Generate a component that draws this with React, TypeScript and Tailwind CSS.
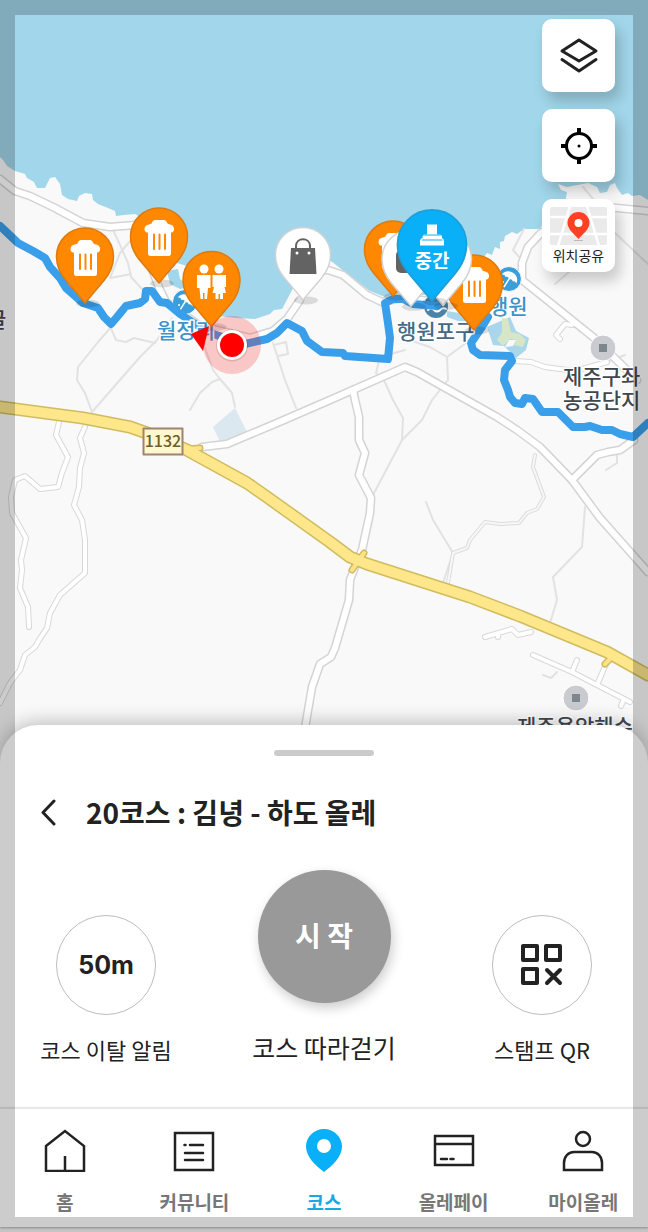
import type { ReactNode } from 'react';

const WHITE_ROADS = [
  'M0 179L15 191L30 196L53 207L83 223L110 227L135 225L160 290L166 302L200 326L250 338L273 331L287 319L300 300',
  'M300 270L328 270L343 275L367 295L382 302L400 298L440 302',
  'M202 447L227 444L277 423L330 400L405 367L417 372L497 417L517 430L540 447L572 480L600 518L648 572',
  'M572 480L597 455L608 452L620 450L634 440',
  'M353 390L355 400L359 417L359 440L365 453L359 475L371 498L370 513L362 550L355 567L350 580L349 600L335 648L331 657L320 664L312 687L305 728',
  'M548 228L540 234L528 247L522 263L522 280L537 292L593 337L637 380',
  'M600 207L617 208L648 211',
];

const NARROW_ROADS = [
  'M59 422L56 435L68 457L62 473L58 487L40 489L25 476L15 480L11 497L12 513L26 538L21 560L22 570L20 588L28 607L29 627',
  'M85 427L80 438L84 453L80 468L79 487L74 505L82 520L85 540L85 573L60 595L50 613L47 628L39 640L35 647L25 655L20 670L10 683L0 703',
  'M485 637L512 629L518 635L531 632M498 633L498 637',
  'M533 655L572 672L597 685L630 702M572 672L577 660M597 685L606 664M624 699L621 706',
  'M515 361L531 362L545 367L575 371L607 362',
  'M572 325L565 324L556 335L560 339',
];

const PATHS = [
  'M92 412L85 393L77 380L78 367L98 342L112 326L122 312',
  'M92 412L140 357L157 340L172 318',
  'M113 230L120 245L128 263L131 277L143 290',
  'M131 240L120 253L110 278L131 274',
  'M110 326L116 340L126 342L134 338L155 343',
  'M190 410L200 393L212 382L220 379',
  'M203 343L213 370L220 379L232 393L235 407',
  'M273 343L285 380L296 408M274 345L286 342L288 354L278 356',
  'M393 400L403 418L402 440L373 495M402 440L422 420L432 400L448 380L447 357L470 340',
  'M393 400L383 378L376 373L380 357L405 350M447 357L430 347L415 342',
  'M426 502L433 520L453 553L443 583',
  'M585 507L582 547L553 577L557 600L550 623',
  'M617 455L617 463L606 470',
  'M557 672L551 678L543 675',
  'M615 233L648 264M555 284L590 254M524 229L513 250L520 258M607 362L625 355M583 187L600 207',
];

const DOUBLE_PATHS = 'M535 455L533 467L544 497L537 509L527 513L519 523L500 524L485 522L470 540L467 548L453 553L448 583';

const HIGHWAY =
  'M0 407L83 418L130 427L147 433L187 450L247 483L267 497L330 542L350 557L367 564L470 597L520 616L607 652L648 675';
const RAMPS = 'M187 449L200 448M352 570L364 553M605 664L613 656';

const ROUTE_WEST =
  'M0 226L18 243L33 251L45 258L50 267L60 278L66 288L83 303L98 308L104 317L111 324L117 317L126 306L140 303L145 299L146 291L152 291L160 302L167 303L180 314L200 327L213 334L245 344L267 339L277 333L287 323L302 331L307 341L322 352L343 353L345 356L388 359L390 338L388 323L385 303L393 299L403 299L413 304L437 306';
const ROUTE_EAST =
  'M488 317L482 327L471 343L473 350L480 355L510 356L512 361L505 370L504 380L508 390L510 397L515 403L522 404L525 398L533 399L542 412L558 412L573 427L585 427L590 426L602 430L612 430L620 434L633 437L648 423';

function Pin({ x, y, fill, stroke, r = 28.5, children }: {
  x: number; y: number; fill: string; stroke: string; r?: number; children?: ReactNode;
}) {
  return (
    <g transform={`translate(${x} ${y})`}>
      <ellipse cx="3" cy={r * 1.65} rx="12" ry="4" fill="#000" opacity="0.12" />
      <path
        transform={`scale(${r / 28.5})`}
        d="M-28.5 0A28.5 28.5 0 0 1 28.5 0C28.5 9 25 17 19 24L0 46.5L-19 24C-25 17-28.5 9-28.5 0Z"
        fill={fill}
        stroke={stroke}
        strokeWidth="1.5"
      />
      {children}
    </g>
  );
}

function TrashGlyph() {
  return (
    <>
      <path
        d="M-11-4H-12.500Q-14.500-5-14.500-7V-8Q-14-11.500-10-12Q-7-12.500-7-14Q-6.500-16.500-4-16.500H5Q7.500-16.500 8-14Q8-12.500 11-12Q14.500-11.500 15-8V-7Q15-5 13-4H12V17Q12 19.500 9.500 19.500H-8.500Q-11 19.500-11 17Z"
        fill="#fff"
      />
      <path d="M-5-2V12.500M0.500-2V12.500M6-2V12.500" stroke="#ff8800" strokeWidth="2" />
    </>
  );
}

function TrashPin({ x, y }: { x: number; y: number }) {
  return (
    <Pin x={x} y={y} fill="#ff8800" stroke="#df7a0c">
      <TrashGlyph />
    </Pin>
  );
}

function BeachMark({ x, y }: { x: number; y: number }) {
  return (
    <g transform={`translate(${x} ${y})`}>
      <circle r="12.5" fill="#3a9edb" stroke="#fff" />
      <g transform="rotate(32)">
        <path d="M-8.500 0C-8-10 8-10 8.500 0Q6.500-2 4.500 0Q2.500-2 0.500 0Q-2-2-4-0Q-6.500-2-8.500 0Z" fill="#fff" />
        <path d="M0-1V9" stroke="#fff" strokeWidth="1.500" />
      </g>
      <circle cx="-6" cy="3" r="1" fill="#fff" />
    </g>
  );
}

function Poi({ x, y }: { x: number; y: number }) {
  return (
    <g transform={`translate(${x} ${y})`}>
      <circle r="13" fill="#c9cbd0" stroke="#fff" />
      <rect x="-4" y="-4" width="8" height="8" fill="#7c888e" />
    </g>
  );
}

function CourseMap() {
  return (
    <svg
      className="absolute inset-0 h-full w-full font-['Noto_Sans_CJK_KR',sans-serif]"
      viewBox="0 0 648 765"
      preserveAspectRatio="xMidYMin slice"
      strokeLinejoin="round"
      strokeLinecap="round"
      fill="none"
    >
      <rect width="648" height="765" fill="#f9f9f9" />
      <path
        fill="#a2d6ea"
        d="M0 0H648V200L640 195L632 196L628 193L622 195L617 188L615 183L610 185L607 192L600 193L597 187L588 183L567 187L558 184L561 190L567 192L565 203L545 220L540 229L524 229L517 234L512 232L505 236L504 241L500 242L500 249L495 247L492 255L487 253L478 265L462 290L440 296L400 293L385 297L370 291L350 276L331 261L310 265L297 280L290 294L282 309L274 310L270 314L255 319L237 318L208 315L190 292L187 266L177 263L172 255L150 222L135 214L124 215L116 216L115 211L108 208L98 204L93 200L92 194L85 193L79 196L77 201L68 199L62 195L60 184L55 177L50 178L45 188L37 188L34 182L27 178L25 174L15 171L7 166L3 160L0 157Z"
      />
      <path d="M167 271L178 269L180 279L190 287L180 289L170 284Z" fill="#a2d6ea" />
      <path d="M447 311L465 314L475 322L458 321L447 317Z" fill="#a9d6ea" />
      <path d="M487 327L510 317L516 331L529 338L526 350L516 358L504 346L493 345Z" fill="#a9d6ea" />
      <path d="M502 318L508 319L511 332L520 334L526 340L523 347L514 345L516 340L510 339L503 346L497 340L502 332Z" fill="#d6e6c6" />
      <path d="M505 347L509 340L516 340L513 346Z" fill="#f9f9f9" />
      <path d="M235 408L247 432L220 442L213 427Z" fill="#dce8f0" />

      <g stroke="#e2e2e2" strokeWidth="2">
        {PATHS.map((d) => <path key={d} d={d} />)}
      </g>
      <path d={DOUBLE_PATHS} stroke="#dcdcdc" strokeWidth="4" />
      <path d={DOUBLE_PATHS} stroke="#f7f7f7" strokeWidth="2" />
      <g stroke="#d8d8d8" strokeWidth="6">
        {NARROW_ROADS.map((d) => <path key={d} d={d} />)}
      </g>
      <g stroke="#d4d4d4" strokeWidth="9">
        {WHITE_ROADS.map((d) => <path key={d} d={d} />)}
      </g>
      <g stroke="#fff" strokeWidth="4">
        {NARROW_ROADS.map((d) => <path key={d} d={d} />)}
      </g>
      <g stroke="#fff" strokeWidth="6">
        {WHITE_ROADS.map((d) => <path key={d} d={d} />)}
      </g>

      <path d={RAMPS} stroke="#cfbc5e" strokeWidth="7" />
      <path d={HIGHWAY} stroke="#cfbc5e" strokeWidth="13" />
      <path d={RAMPS} stroke="#fbe285" strokeWidth="4" />
      <path d={HIGHWAY} stroke="#fee78b" strokeWidth="10" />

      <rect x="143.500" y="428.500" width="39" height="26" fill="#fff7cd" stroke="#a08272" strokeWidth="2" />
      <text x="163" y="447" textAnchor="middle" fontSize="16" fontWeight="500" fill="#6a602f">1132</text>

      <BeachMark x={185} y={302} />
      <BeachMark x={509} y={279} />
      <circle cx="436" cy="306" r="12" fill="#4a83a8" />
      <path d="M428 310Q431 307 434 310T440 310T446 309" stroke="#fff" strokeWidth="2" />
      <Poi x={603} y={348} />
      <Poi x={576} y={698} />

      <path d={ROUTE_WEST} stroke="#3a9fea" strokeWidth="8" />
      <path d={ROUTE_EAST} stroke="#3a9fea" strokeWidth="8" />

      <g fontSize="21" fontWeight="500" stroke="#fff" strokeWidth="3" paintOrder="stroke">
        <text x="157" y="338" fill="#3d93cc">월정리</text>
        <text x="489" y="314" fill="#3d93cc">행원</text>
        <text x="397" y="339" fill="#456b84">행원포구</text>
        <text y="384" fill="#40484e">
          <tspan x="563">제주구좌</tspan>
          <tspan x="563" dy="24">농공단지</tspan>
        </text>
        <text x="517" y="734" fill="#40484e">제주용암해수</text>
        <text x="-13" y="327" fill="#40484e">글</text>
      </g>

      <TrashPin x={85} y={256.5} />
      <TrashPin x={159} y={236.5} />
      <Pin x={211.500} y={280} fill="#ff8800" stroke="#df7a0c">
        <circle cx="-7.500" cy="-11" r="4.500" fill="#fff" />
        <circle cx="7.500" cy="-11" r="4.500" fill="#fff" />
        <path d="M-14.500-5H-1V8H-3.500L-4.500 19H-7V13H-8.500V19H-11L-12 8H-14.500Z" fill="#fff" />
        <path d="M1-5H14.500V7H13L14.500 13H11.500V19H8.500V14H7V19H4V13H1L2.500 7H1Z" fill="#fff" />
      </Pin>
      <Pin x={303} y={255} r={27.500} fill="#fff" stroke="#d2d2d2">
        <path d="M-12-7H12L13.500 19H-13.500Z" fill="#636363" />
        <path d="M-7-4V-9C-7-18 7-18 7-9V-4" stroke="#636363" strokeWidth="2" />
        <circle cx="-6" cy="-2" r="1.500" fill="#fff" />
        <circle cx="6" cy="-2" r="1.500" fill="#fff" />
      </Pin>
      <TrashPin x={393} y={249.5} />
      <TrashPin x={474} y={283.5} />
      <Pin x={443} y={259} r={28.500} fill="#fff" stroke="#d2d2d2" />
      <Pin x={411} y={259} r={29} fill="#fff" stroke="#d2d2d2">
        <rect x="-15" y="-9" width="28" height="23" rx="5" fill="#636363" />
      </Pin>
      <Pin x={432} y={244.500} r={34.500} fill="#0ab0f7" stroke="#1c9fdc">
        <path d="M-5-20H5V-10H8.500Q10-10 10-6.500Q12-6 12-3V1H-12V-3Q-12-6-9.500-6.500Q-9.500-10-8-10H-5Z" fill="#fff" />
        <path d="M-9-9.500H9M-10-4.500H10" stroke="#0ab0f7" />
        <text x="0" y="23" textAnchor="middle" fontSize="19" fontWeight="700" fill="#fff">중간</text>
      </Pin>

      {/* current position */}
      <circle cx="232" cy="345" r="29" fill="#ff0000" opacity="0.2" />
      <path d="M191 334L209 326L203 351Z" fill="#ff0000" />
      <circle cx="232" cy="345.500" r="16" fill="#000" opacity="0.12" />
      <circle cx="232" cy="345" r="15" fill="#fff" />
      <circle cx="232" cy="345" r="12" fill="#ff0000" />
    </svg>
  );
}

function MapButton({ label, children }: { label: string; children: ReactNode }) {
  return (
    <button
      aria-label={label}
      className="flex size-[73px] flex-col items-center justify-center rounded-[10px] bg-white shadow-[5px_9px_14px_rgba(0,0,0,0.2)]"
    >
      {children}
    </button>
  );
}

function RoundAction({ label, children }: { label: string; children: ReactNode }) {
  return (
    <button className="flex flex-col items-center gap-[18px] text-[22px] leading-8">
      <span className="flex size-[100px] items-center justify-center rounded-full border border-[#bdbdbd]">
        {children}
      </span>
      {label}
    </button>
  );
}

const NAV_ITEMS = [
  {
    label: '홈',
    icon: <path d="M2 17L21 2L40 17V42H2ZM21 42V27" />,
  },
  {
    label: '커뮤니티',
    icon: (
      <>
        <path d="M2 4H40V41H2Z" />
        <path d="M17 16H30M12 24H30M12 31H30M11.500 16H12.500" strokeLinecap="round" />
      </>
    ),
  },
  {
    label: '코스',
    active: true,
    icon: (
      <path
        d="M21 0C11 0 3 8 3 17.500C3 28 13 37 21 43C29 37 39 28 39 17.500C39 8 31 0 21 0ZM21 10A7 7 0 1 1 21 24A7 7 0 1 1 21 10Z"
        fill="#0ab0f7"
        fillRule="evenodd"
        stroke="none"
      />
    ),
  },
  {
    label: '올레페이',
    icon: (
      <>
        <path d="M2 7H40V36H2ZM2 15H40" />
        <path d="M8 30H14M17.500 30H20.500" strokeLinecap="round" />
      </>
    ),
  },
  {
    label: '마이올레',
    icon: (
      <>
        <circle cx="21" cy="10" r="7" />
        <path d="M2 41V34C2 28 6 23 12 23H30C36 23 40 28 40 34V41Z" />
      </>
    ),
  },
];

export default function App() {
  return (
    <div className="relative flex min-h-screen flex-col bg-[#f6f6f6] font-['Noto_Sans_CJK_KR','Noto_Sans',sans-serif] text-[#222]">
      <main className="relative flex min-h-[560px] flex-1 flex-col items-end overflow-hidden pt-[19px] pr-[33px]">
        <CourseMap />
        <div className="relative flex flex-col gap-[17px]">
          <MapButton label="지도 유형">
            <svg width="40" height="40" viewBox="0 0 40 40" fill="none" stroke="#222" strokeWidth="3" strokeLinejoin="round" strokeLinecap="round">
              <path d="M20 4L37 15L20 25L3 15Z" />
              <path d="M3 23.500L20 35L37 23.500" />
            </svg>
          </MapButton>
          <MapButton label="현재 위치">
            <svg width="38" height="38" viewBox="0 0 38 38" fill="none" stroke="#000" strokeWidth="3">
              <circle cx="19" cy="19" r="12.500" />
              <path d="M19 1V8M19 30V37M1 19H8M30 19H37" strokeWidth="4" />
              <circle cx="19" cy="19" r="1.500" fill="#000" stroke="none" />
            </svg>
          </MapButton>
          <MapButton label="위치공유">
            <svg width="57" height="38" viewBox="0 0 57 38">
              <rect width="57" height="38" rx="2" fill="#eaeaea" />
              <path d="M0 10H57M0 27H57M20-1L8 39M37-1L49 39" stroke="#fff" strokeWidth="2.500" />
              <path d="M28.500 5A11 11 0 0 0 17.500 16C17.500 22 24 27 28.500 32C33 27 39.500 22 39.500 16A11 11 0 0 0 28.500 5Z" fill="#ff4023" />
              <circle cx="28.500" cy="16" r="4" fill="#fff" />
              <path d="M24 33.500H33" stroke="#bbb" />
            </svg>
            <span className="text-sm leading-5">위치공유</span>
          </MapButton>
        </div>
      </main>

      <section className="relative -mt-10 rounded-t-[38px] bg-white pt-[25px] pb-[42px] shadow-[0_-4px_18px_rgba(0,0,0,0.22)]">
        <div className="mx-auto h-1.5 w-[100px] rounded-full bg-[#cbcbcb]" />
        <header className="mt-9 flex h-10 items-center gap-7 pl-10">
          <button aria-label="뒤로">
            <svg width="18" height="28" viewBox="0 0 18 28" fill="none" stroke="#222" strokeWidth="3" strokeLinecap="round" strokeLinejoin="round">
              <path d="M14 3L3 14.500L14 26" />
            </svg>
          </button>
          <h1 className="text-[28px] leading-10 font-bold">20코스 : 김녕 - 하도 올레</h1>
        </header>

        <div className="mt-[38px] grid grid-cols-[1fr_224px_1fr] items-end">
          <RoundAction label="코스 이탈 알림">
            <span className="font-[Inter,sans-serif] text-[25px] font-bold">50m</span>
          </RoundAction>
          <button className="flex flex-col items-center gap-[26px] text-[25px] leading-9">
            <span className="flex size-[133px] items-center justify-center rounded-full bg-[#999] pb-1 text-[28px] font-bold text-white shadow-[2px_5px_12px_rgba(0,0,0,0.2)]">
              시 작
            </span>
            코스 따라걷기
          </button>
          <RoundAction label="스탬프 QR">
            <svg width="44" height="44" viewBox="0 0 44 44" fill="none" stroke="#222" strokeWidth="4" strokeLinejoin="round" strokeLinecap="round">
              <path d="M3 3H17V17H3ZM26 3H40V17H26ZM3 26H17V40H3Z" />
              <path d="M27 27L40 40M40 27L27 40" />
            </svg>
          </RoundAction>
        </div>
      </section>

      <nav className="relative mb-[5px] grid grid-cols-5 border-t-2 border-[#e8e8e8] bg-white pt-5 pb-[13px] shadow-[0_1px_2px_rgba(0,0,0,0.3)]">
        {NAV_ITEMS.map(({ label, icon, active }) => (
          <a
            key={label}
            href="#"
            className={`flex flex-col items-center gap-[18px] text-[19px] leading-6 font-bold ${active ? 'text-[#18a8e6]' : 'text-[#777]'}`}
          >
            <svg width="42" height="43" viewBox="0 0 42 43" fill="none" stroke="#222" strokeWidth="2.500">
              {icon}
            </svg>
            {label}
          </a>
        ))}
      </nav>

      <div className="pointer-events-none absolute inset-0 border-[15px] border-black/20" />
    </div>
  );
}
